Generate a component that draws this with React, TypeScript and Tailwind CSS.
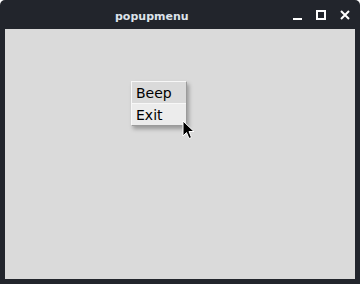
import React from "react";

export default function App() {
  return (
    <div className="w-[360px] h-[284px] bg-[#22252c] rounded-t-[5px] flex flex-col overflow-hidden" style={{ fontFamily: '"DejaVu Sans", sans-serif' }}>
      <div className="h-[29px] flex items-center relative shrink-0">
        <span className="ml-[115px] mt-[3px] text-[11px] font-bold text-[#dde3ea] leading-none">popupmenu</span>
        <div className="ml-auto flex items-center gap-[14px] mr-[10px]">
          <svg width="9" height="10" viewBox="0 0 9 10"><rect x="0" y="8" width="9" height="2" fill="#ffffff" /></svg>
          <svg width="10" height="10" viewBox="0 0 10 10"><rect x="1" y="1" width="8" height="8" fill="none" stroke="#ffffff" strokeWidth="2" /></svg>
          <svg width="10" height="10" viewBox="0 0 10 10"><path d="M1 1L9 9M9 1L1 9" stroke="#ffffff" strokeWidth="2" /></svg>
        </div>
      </div>
      <div className="flex-1 mx-[5px] mb-[5px] bg-[#dadada] relative">
        <div className="absolute left-[126px] top-[52px] w-[56px] border border-t-[#f7f7f7] border-l-[#f7f7f7] border-r-[#9b9b9b] border-b-[#9b9b9b] bg-[#dadada] shadow-[2px_3px_4px_rgba(0,0,0,0.3)] flex flex-col">
          <div className="h-[21px] pl-[4px] flex items-center text-[14px] text-black leading-none">Beep</div>
          <div className="h-[22px] pl-[4px] flex items-center text-[14px] text-black leading-none bg-[#ececec] border-t border-t-[#f7f7f7]">Exit</div>
        </div>
        <svg className="absolute left-[177px] top-[91px]" width="13" height="20" viewBox="0 0 13 20">
          <path d="M1 1 L1 16 L4.5 12.5 L7 18.5 L9.5 17.5 L7 11.5 L12 11.5 Z" fill="#000" stroke="#fff" strokeWidth="1" strokeLinejoin="round" />
        </svg>
      </div>
    </div>
  );
}
